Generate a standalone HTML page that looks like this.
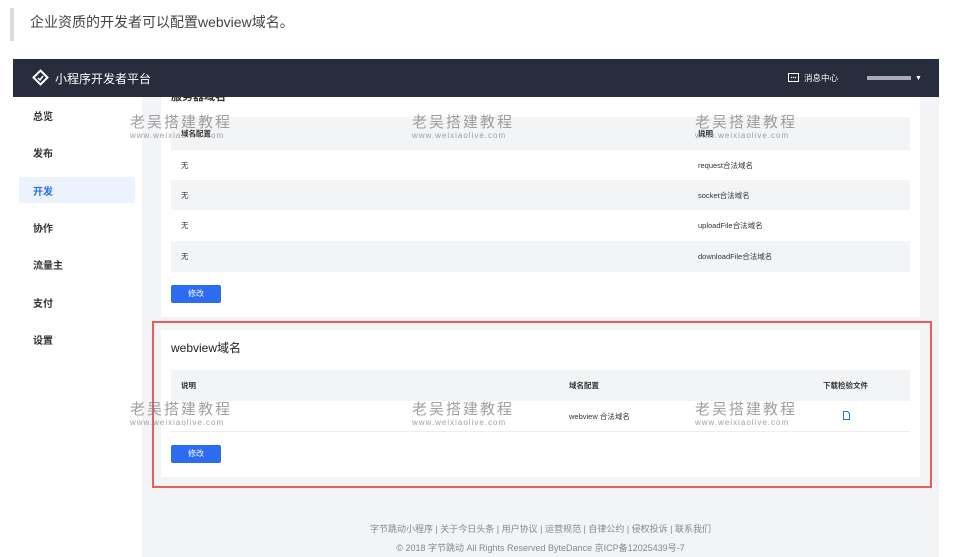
<!DOCTYPE html>
<html><head><meta charset="utf-8"><style>
*{margin:0;padding:0;box-sizing:border-box}
body{width:959px;height:557px;overflow:hidden;background:#fff;font-family:"Liberation Sans","Noto Sans CJK SC",sans-serif;position:relative;color:#333}
.a{position:absolute}
.quote{left:10px;top:8px;width:4px;height:33px;background:#ddd}
.qt{left:30px;top:12px;font-size:14px;color:#444}
.hdr{left:13px;top:59px;width:926px;height:38px;background:#272d3d;color:#fff}
.side{left:13px;top:97px;width:129px;height:460px;background:#fff}
.main{left:142px;top:97px;width:797px;height:460px;background:#f3f4f6}
.nav{position:absolute;left:20px;font-size:10px;font-weight:bold;color:#333}
.card{background:#fff}
.row{position:absolute;left:171px;width:739px;font-size:7.5px;color:#333}
.btn{position:absolute;left:171px;width:50px;height:18px;background:#2c6cf0;color:#fff;font-size:8px;text-align:center;line-height:18px;border-radius:2px}
.wm{position:absolute;color:rgba(120,120,120,.7);text-align:left}
.wm b{display:block;font-weight:normal;font-size:15px;letter-spacing:2px;line-height:16px}
.wm i{display:block;font-style:normal;font-size:8px;letter-spacing:1px;line-height:9px}
.ft{left:142px;width:797px;text-align:center;font-size:9px;color:#888}
</style></head><body>
<div class="a quote"></div>
<div class="a qt">企业资质的开发者可以配置webview域名。</div>
<div class="a side">
 <div class="nav" style="top:11px">总览</div>
 <div class="nav" style="top:48px">发布</div>
 <div class="a" style="left:6px;top:80px;width:116px;height:26px;background:#edf3fe;border-radius:2px"></div>
 <div class="nav" style="top:86px;color:#2c6cf0">开发</div>
 <div class="nav" style="top:123px">协作</div>
 <div class="nav" style="top:160px">流量主</div>
 <div class="nav" style="top:198px">支付</div>
 <div class="nav" style="top:235px">设置</div>
</div>
<div class="a main"></div>
<div class="a card" style="left:161px;top:97px;width:759px;height:220px"></div>
<div class="a" style="left:171px;top:88px;font-size:11px;font-weight:bold;color:#333">服务器域名</div>
<div class="row" style="top:117px;height:32px;background:#f3f4f6;font-weight:bold"><span class="a" style="left:10px;top:11px">域名配置</span><span class="a" style="left:527px;top:11px">说明</span></div>
<div class="row" style="top:149px;height:31px;border-top:1px solid #eee"><span class="a" style="left:10px;top:10px">无</span><span class="a" style="left:527px;top:10px">request合法域名</span></div>
<div class="row" style="top:180px;height:30px;background:#f3f4f6"><span class="a" style="left:10px;top:10px">无</span><span class="a" style="left:527px;top:10px">socket合法域名</span></div>
<div class="row" style="top:210px;height:31px"><span class="a" style="left:10px;top:10px">无</span><span class="a" style="left:527px;top:10px">uploadFile合法域名</span></div>
<div class="row" style="top:241px;height:31px;background:#f3f4f6"><span class="a" style="left:10px;top:10px">无</span><span class="a" style="left:527px;top:10px">downloadFile合法域名</span></div>
<div class="btn" style="top:285px">修改</div>
<div class="a card" style="left:161px;top:330px;width:759px;height:147px"></div>
<div class="a" style="left:171px;top:339px;font-size:12px;color:#222">webview域名</div>
<div class="row" style="top:370px;height:31px;background:#f3f4f6;font-weight:bold"><span class="a" style="left:10px;top:10px">说明</span><span class="a" style="left:398px;top:10px">域名配置</span><span class="a" style="left:652px;top:10px">下载检验文件</span></div>
<div class="row" style="top:401px;height:31px;border-bottom:1px solid #eee"><span class="a" style="left:398px;top:10px">webview 合法域名</span>
<svg class="a" style="left:672px;top:10px" width="7" height="9"><path d="M.5.5h4l2 2v6h-6z" fill="none" stroke="#2c6cf0"/></svg></div>
<div class="btn" style="top:445px">修改</div>
<div class="a" style="left:152px;top:321px;width:780px;height:167px;border:2px solid #ef5a5a"></div>
<div class="a ft" style="top:522px">字节跳动小程序 | 关于今日头条 | 用户协议 | 运营规范 | 自律公约 | 侵权投诉 | 联系我们</div>
<div class="a ft" style="top:541px">© 2018 字节跳动 All Rights Reserved ByteDance 京ICP备12025439号-7</div>
<div class="a hdr">
 <svg class="a" style="left:19px;top:10px" width="17" height="17" viewBox="0 0 17 17"><path d="M8.5 1.5L15.5 8.5L8.5 15.5L1.5 8.5Z" fill="none" stroke="#fff" stroke-width="2"/><path d="M6 9l2 2 3-4" fill="none" stroke="#fff" stroke-width="1.5"/></svg>
 <div class="a" style="left:42px;top:11px;font-size:12px">小程序开发者平台</div>
 <svg class="a" style="left:775px;top:14px" width="11" height="10"><rect x=".5" y=".5" width="10" height="8" fill="none" stroke="#fff"/><circle cx="3.5" cy="4.5" r=".7" fill="#fff"/><circle cx="5.5" cy="4.5" r=".7" fill="#fff"/><circle cx="7.5" cy="4.5" r=".7" fill="#fff"/></svg>
 <div class="a" style="left:791px;top:13px;font-size:8.5px">消息中心</div>
 <div class="a" style="left:854px;top:17px;width:44px;height:4px;background:#aab"></div>
 <div class="a" style="left:902px;top:16px;font-size:7px">▼</div>
</div>
<div class="wm" style="left:130px;top:115px"><b>老吴搭建教程</b><i>www.weixiaolive.com</i></div>
<div class="wm" style="left:412px;top:115px"><b>老吴搭建教程</b><i>www.weixiaolive.com</i></div>
<div class="wm" style="left:695px;top:115px"><b>老吴搭建教程</b><i>www.weixiaolive.com</i></div>
<div class="wm" style="left:130px;top:402px"><b>老吴搭建教程</b><i>www.weixiaolive.com</i></div>
<div class="wm" style="left:412px;top:402px"><b>老吴搭建教程</b><i>www.weixiaolive.com</i></div>
<div class="wm" style="left:695px;top:402px"><b>老吴搭建教程</b><i>www.weixiaolive.com</i></div>
</body></html>
